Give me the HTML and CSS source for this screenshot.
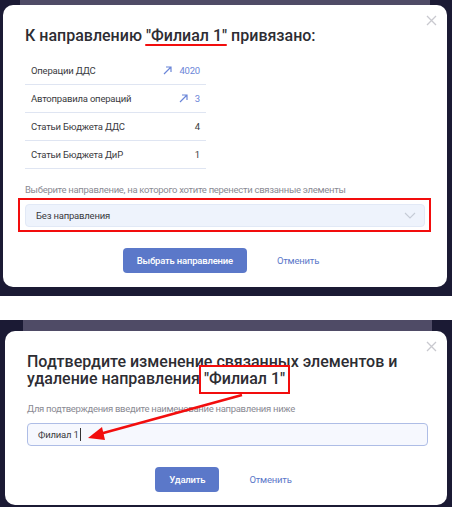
FILE: index.html
```html
<!DOCTYPE html>
<html lang="ru">
<head>
  <meta charset="UTF-8" />
  <meta name="viewport" content="width=device-width, initial-scale=1.0"/>
  <title>Удаление направления</title>
  <link rel="stylesheet" href="styles.css">
</head>
<body>

  <div class="shot shot-first">
    <div class="backdrop backdrop-top"></div>
    <div class="modal">
      <span class="close">
        <svg width="11" height="11" viewBox="0 0 11 11"><path d="M1 1L10 10M10 1L1 10" stroke="#c9c9cf" stroke-width="1.3"/></svg>
      </span>
      <h2 class="modal-title">К направлению <span class="underlined">"Филиал 1"</span> привязано:</h2>

      <ul class="linked">
        <li>
          <span>Операции ДДС</span>
          <a href="#" class="count">
            <svg width="9" height="9" viewBox="0 0 9 9"><path d="M1 8L8 1M3 1H8V6" fill="none" stroke="#6b86d8" stroke-width="1.2"/></svg>
            4020
          </a>
        </li>
        <li>
          <span>Автоправила операций</span>
          <a href="#" class="count">
            <svg width="9" height="9" viewBox="0 0 9 9"><path d="M1 8L8 1M3 1H8V6" fill="none" stroke="#6b86d8" stroke-width="1.2"/></svg>
            3
          </a>
        </li>
        <li>
          <span>Статьи Бюджета ДДС</span>
          <span class="count">4</span>
        </li>
        <li>
          <span>Статьи Бюджета ДиР</span>
          <span class="count">1</span>
        </li>
      </ul>

      <p class="hint">Выберите направление, на которого хотите перенести связанные элементы</p>
      <div class="select marked">
        <span>Без направления</span>
        <svg width="12" height="7" viewBox="0 0 12 7"><path d="M1 1L6 6L11 1" fill="none" stroke="#c5cbd6" stroke-width="1.1"/></svg>
      </div>

      <div class="actions">
        <button class="btn">Выбрать направление</button>
        <a href="#" class="link">Отменить</a>
      </div>
    </div>
  </div>

  <div class="gap"></div>

  <div class="shot shot-second">
    <div class="backdrop backdrop-bottom"></div>
    <div class="modal">
      <span class="close">
        <svg width="11" height="11" viewBox="0 0 11 11"><path d="M1 1L10 10M10 1L1 10" stroke="#c9c9cf" stroke-width="1.3"/></svg>
      </span>
      <h2 class="modal-title two-lines">Подтвердите изменение связанных элементов и удаление направления <span class="boxed">"Филиал 1"</span></h2>

      <p class="hint">Для подтверждения введите наименование направления ниже</p>
      <div class="input"><span class="caret">Филиал 1</span></div>

      <div class="actions">
        <button class="btn">Удалить</button>
        <a href="#" class="link">Отменить</a>
      </div>
    </div>

    <!-- пометка: стрелка -->
    <svg class="mark-arrow" width="170" height="60" viewBox="0 0 170 60"><path d="M158 3L12 43" fill="none" stroke="#f20d0d" stroke-width="2.5"/><path d="M4 46L18 35L21 48Z" fill="#f20d0d"/></svg>
  </div>

</body>
</html>
```

FILE: styles.css
```css
* {
  box-sizing: border-box;
  font-family: Roboto, sans-serif;
}

body {
  margin: 0;
  padding: 0;
  background: #fff;
  color: #333;
}

.shot {
  position: relative;
  background: #1b1a34;
}

.shot-first {
  height: 296px;
  padding: 0 5px 0 3px;
}

.shot-second {
  height: 187px;
  padding: 0 5px 0 5px;
}

.gap {
  height: 24px;
}

.backdrop {
  background: #4f4b66;
}

.backdrop-top {
  height: 5px;
  margin: 0 17px 0 17px;
}

.backdrop-bottom {
  height: 11px;
  margin: 0 15px 0 18px;
}

.modal {
  position: relative;
  background: #fff;
  border-radius: 10px;
  padding: 19px 22px 14px 22px;
}

.shot-second .modal {
  padding: 22px 19px 13px 22px;
}

.close {
  position: absolute;
  top: 10px;
  right: 10px;
  line-height: 0;
}

.modal-title {
  margin: 0 0 9px;
  font-size: 16px;
  font-weight: 500;
  line-height: 24px;
  color: #2d2d33;
}

.two-lines {
  line-height: 17px;
  margin-bottom: 15px;
}

.underlined {
  position: relative;
}

.underlined::after {
  content: "";
  position: absolute;
  left: -1px;
  right: 0;
  bottom: -1px;
  height: 2px;
  background: #f20d0d;
  border-radius: 1px;
}

.boxed {
  position: relative;
}

.boxed::after {
  content: "";
  position: absolute;
  left: -5px;
  right: -5px;
  top: -4px;
  bottom: -6px;
  border: 2px solid #f20d0d;
}

.linked {
  list-style: none;
  margin: 0;
  padding: 0;
  width: 181px;
}

.linked li {
  display: flex;
  justify-content: space-between;
  align-items: center;
  height: 28px;
  padding: 0 6px;
  border-bottom: 1px solid #dfe5f2;
  font-size: 9.5px;
  letter-spacing: -0.2px;
  color: #3a3a40;
}

.count {
  display: flex;
  align-items: center;
  gap: 7px;
  color: #3a3a40;
  text-decoration: none;
}

a.count {
  color: #6b86d8;
}

.hint {
  margin: 14px 0 7px;
  font-size: 9.5px;
  letter-spacing: -0.3px;
  line-height: 14px;
  color: #8a8a93;
}

.select {
  display: flex;
  justify-content: space-between;
  align-items: center;
  height: 23px;
  padding: 0 8px 0 10px;
  background: #eef3fc;
  border: 1px solid #e2e9f6;
  border-radius: 4px;
  font-size: 9.5px;
  letter-spacing: -0.2px;
  color: #3a3a40;
}

.marked {
  position: relative;
}

.marked::after {
  content: "";
  position: absolute;
  left: -8px;
  right: -7px;
  top: -7px;
  bottom: -6px;
  border: 2px solid #f20d0d;
}

.input {
  display: flex;
  align-items: center;
  height: 23px;
  padding: 0 10px;
  background: #f6f8fe;
  border: 1px solid #aebde6;
  border-radius: 4px;
  font-size: 9.5px;
  letter-spacing: -0.2px;
  color: #3a3a40;
}

.caret {
  border-right: 1px solid #333;
  padding-right: 1px;
  line-height: 13px;
}

.actions {
  display: flex;
  justify-content: center;
  align-items: center;
  gap: 22px;
  margin-top: 21px;
}

.btn {
  height: 25px;
  padding: 0 14px;
  background: #5b78c9;
  color: #fff;
  border: none;
  border-radius: 4px;
  font-size: 9.5px;
  letter-spacing: -0.2px;
  font-weight: 500;
  cursor: pointer;
}

.link {
  padding: 0 8px;
  color: #5b78c9;
  font-size: 9.5px;
  letter-spacing: -0.2px;
  text-decoration: none;
}

.mark-arrow {
  position: absolute;
  left: 84px;
  top: 72px;
}
```
